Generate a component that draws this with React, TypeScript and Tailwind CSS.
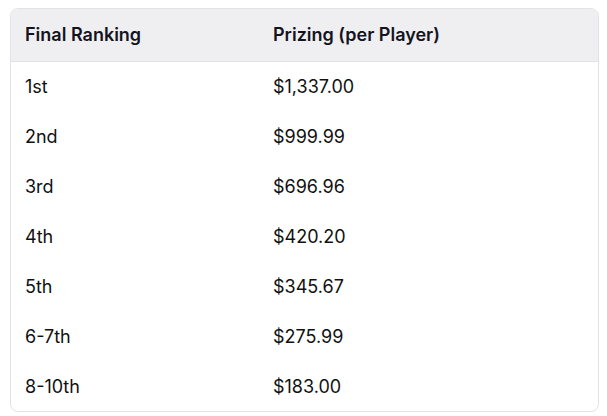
const rows: [string, string][] = [
  ['1st', '$1,337.00'],
  ['2nd', '$999.99'],
  ['3rd', '$696.96'],
  ['4th', '$420.20'],
  ['5th', '$345.67'],
  ['6-7th', '$275.99'],
  ['8-10th', '$183.00'],
];

export default function App() {
  return (
    <div className="h-[416px] w-[607px] bg-white pl-[10px] pr-[8px] pt-[8px] font-['Inter',sans-serif] text-[#111]">
      <div className="overflow-hidden rounded-lg border border-[#e3e3e6]">
        <table className="w-full border-collapse text-left text-[18px]">
          <thead>
            <tr className="h-[52px] border-b border-[#e3e3e6] bg-[#efeff2]">
              <th className="w-[248px] pl-[14px] font-semibold text-[#141420]">Final Ranking</th>
              <th className="pl-[14px] font-semibold text-[#141420]">Prizing (per Player)</th>
            </tr>
          </thead>
          <tbody>
            {rows.map(([rank, prize]) => (
              <tr key={rank} className="h-[50px]">
                <td className="pl-[14px]">{rank}</td>
                <td className="pl-[14px]">{prize}</td>
              </tr>
            ))}
          </tbody>
        </table>
      </div>
    </div>
  );
}
